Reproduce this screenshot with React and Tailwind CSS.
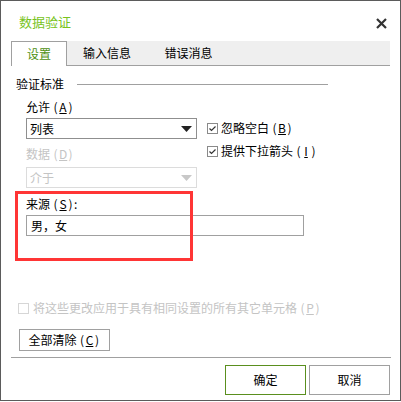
const Check = ({ disabled }) => (
  <span
    className={`flex h-[11px] w-[11px] shrink-0 items-center justify-center border ${
      disabled ? "border-[#d6d6d6]" : "border-[#8a8a8a]"
    }`}
  >
    {!disabled && (
      <svg width="9" height="9" viewBox="0 0 9 9">
        <path d="M1.5 4.5 L3.5 6.5 L7.5 2.5" fill="none" stroke="#333" strokeWidth="1.2" />
      </svg>
    )}
  </span>
);

const Arrow = ({ color }) => (
  <svg width="11" height="6" viewBox="0 0 11 6">
    <path d="M0 0 H11 L5.5 6 Z" fill={color} />
  </svg>
);

// accelerator key, e.g. (A)
const Key = ({ k }) => (
  <span className="ml-[2px] inline-flex">
    <span className="w-[7px] text-center">(</span>
    <span className="w-[8px] text-center underline">{k}</span>
    <span className="w-[7px] text-center">)</span>
  </span>
);

const App = () => {
  return (
    <div
      className="relative h-[401px] w-[401px] border border-[#5b5b5b] bg-white text-[12px] text-[#000]"
      style={{ fontFamily: '"Noto Sans CJK SC", "Noto Sans", sans-serif' }}
    >
      {/* title bar */}
      <div className="flex h-[40px] items-center justify-between pl-[18px] pr-[13px]">
        <span className="text-[13px] leading-none text-[#78c31c]">数据验证</span>
        <svg width="11" height="11" viewBox="0 0 11 11" className="mt-[4px]">
          <path d="M1 1 L10 10 M10 1 L1 10" stroke="#333" strokeWidth="2.2" />
        </svg>
      </div>

      {/* tabs */}
      <div className="ml-[10px] flex h-[25px] w-[379px] border-b border-[#a0a0a0] bg-[#efefef]">
        <div className="-mb-px flex w-[56px] items-center justify-center border-x border-t border-[#a0a0a0] bg-white text-[#4e8f10]">
          设置
        </div>
        <div className="flex w-[80px] items-center justify-center">输入信息</div>
        <div className="flex w-[83px] items-center justify-center">错误消息</div>
      </div>

      {/* criteria */}
      <div className="ml-[15px] mt-[10px] flex h-[16px] w-[312px] items-center">
        <span className="leading-none">验证标准</span>
        <div className="ml-[13px] h-px flex-1 bg-[#a0a0a0]" />
      </div>

      <div className="ml-[25px] mt-[7px] flex h-[16px] items-center leading-none">
        允许<Key k="A" />
      </div>

      <div className="ml-[25px] mt-[3px] flex">
        <div className="flex w-[171px] flex-col">
          <div className="flex h-[21px] items-center justify-between border border-[#8f8f8f] pl-[3px] pr-[4px]">
            <span className="leading-none">列表</span>
            <Arrow color="#222" />
          </div>
          <div className="mt-[7px] flex h-[16px] items-center leading-none text-[#c4c4c4]">
            数据<Key k="D" />
          </div>
          <div className="mt-[5px] flex h-[21px] items-center justify-between border border-[#dcdcdc] pl-[3px] pr-[4px] text-[#c4c4c4]">
            <span className="leading-none">介于</span>
            <Arrow color="#c8c8c8" />
          </div>
        </div>

        <div className="ml-[10px] flex flex-col">
          <div className="flex h-[20px] items-center gap-[3px] leading-none">
            <Check />
            <span className="flex">忽略空白<Key k="B" /></span>
          </div>
          <div className="mt-[3px] flex h-[20px] items-center gap-[3px] leading-none">
            <Check />
            <span className="flex">提供下拉箭头<Key k="I" /></span>
          </div>
        </div>
      </div>

      <div className="ml-[25px] mt-[8px] flex h-[16px] items-center leading-none">
        来源<Key k="S" />:
      </div>
      <div className="ml-[25px] mt-[3px] flex h-[21px] w-[278px] items-center border border-[#a0a0a0] pl-[4px] leading-none">
        男，女
      </div>

      <div className="ml-[17px] mt-[64px] flex h-[16px] items-center gap-[4px] leading-none text-[#c4c4c4]">
        <Check disabled />
        <span className="flex">将这些更改应用于具有相同设置的所有其它单元格<Key k="P" /></span>
      </div>

      <div className="ml-[18px] mt-[13px] flex h-[22px] w-[91px] items-center justify-center border border-[#a0a0a0] leading-none">
        全部清除<Key k="C" />
      </div>

      <div className="ml-[10px] mt-[6px] h-px w-[380px] bg-[#a0a0a0]" />

      <div className="mt-[7px] flex justify-end gap-[3px] pr-[10px]">
        <div className="flex h-[30px] w-[81px] items-center justify-center border border-[#5a8f1e] leading-none">
          确定
        </div>
        <div className="flex h-[30px] w-[81px] items-center justify-center border border-[#a0a0a0] leading-none">
          取消
        </div>
      </div>

      {/* red annotation */}
      <div className="pointer-events-none absolute left-[14px] top-[190px] h-[70px] w-[178px] border-[3px] border-[#ff3535]" />
    </div>
  );
};

export default App;
